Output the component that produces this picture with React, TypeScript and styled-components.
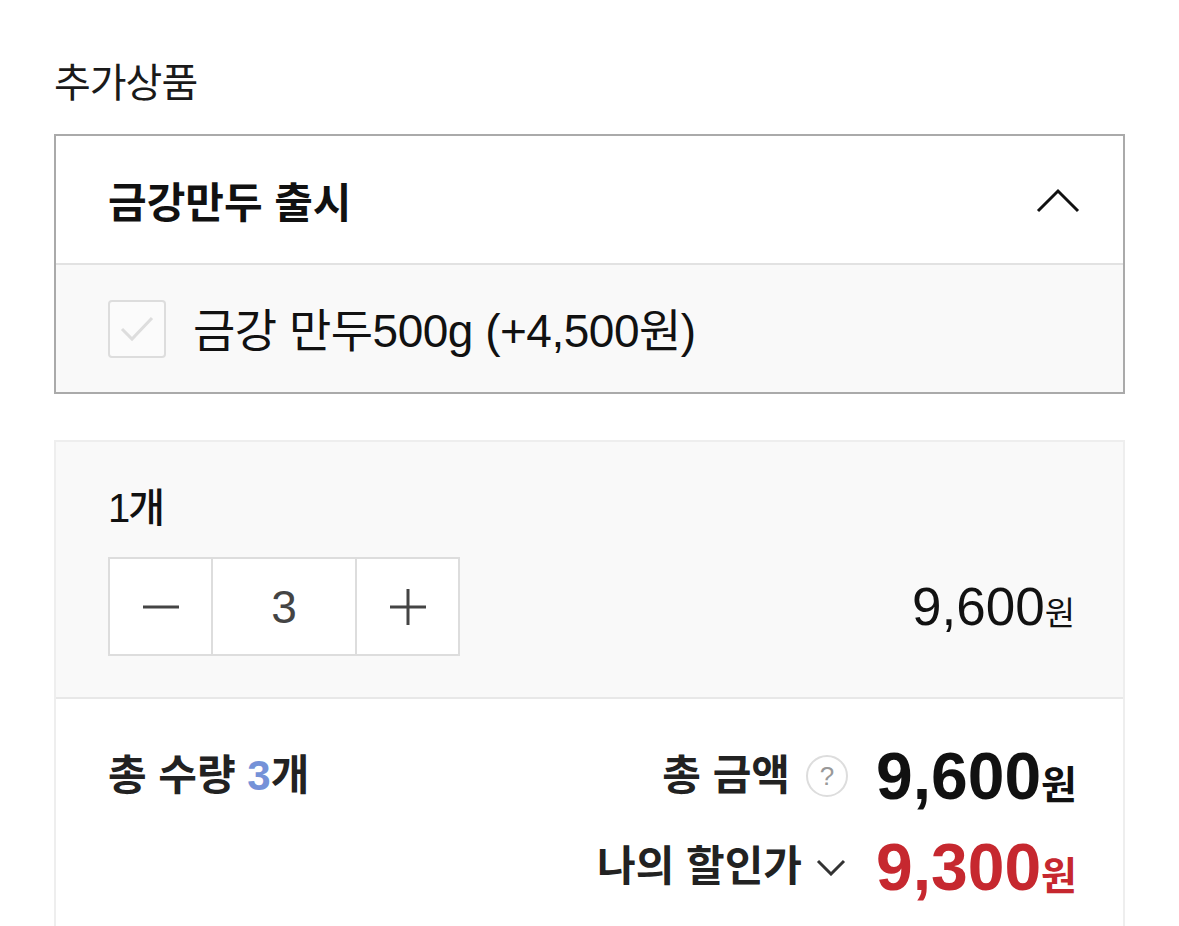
import styled, { createGlobalStyle } from 'styled-components';

const GlobalStyle = createGlobalStyle`
  body {
    margin: 0;
    background: #fff;
    color: #111;
    font-family: "Liberation Sans", "Noto Sans CJK KR", sans-serif;
  }
`;

const Page = styled.div`
  padding: 61px 54px 0;
`;

const Title = styled.h2`
  margin: 0 0 29px;
  font-size: 40px;
  font-weight: 400;
  line-height: 44px;
  letter-spacing: -1px;
  color: #1a1a1a;
`;

const OptionBox = styled.div`
  border: 2px solid #aaa;
`;

const OptionHeader = styled.div`
  align-items: center;
  border-bottom: 2px solid #e2e2e2;
  display: flex;
  height: 127px;
  justify-content: space-between;
  padding: 0 43px 0 52px;
`;

const HeaderTitle = styled.span`
  font-size: 42px;
  font-weight: 700;
`;

const OptionRow = styled.label`
  align-items: center;
  background: #f9f9f9;
  display: flex;
  gap: 27px;
  height: 127px;
  padding-left: 52px;
`;

const Checkbox = styled.span`
  align-items: center;
  background: #fbfbfb;
  border: 2px solid #ddd;
  border-radius: 4px;
  box-sizing: border-box;
  display: flex;
  height: 58px;
  justify-content: center;
  width: 58px;
`;

const OptionText = styled.span`
  font-size: 46px;
  letter-spacing: -0.5px;
  margin-top: -4px;
`;

const CartBox = styled.div`
  border: 2px solid #eee;
  border-bottom: none;
  margin-top: 46px;
`;

const ItemSection = styled.div`
  background: #f9f9f9;
  border-bottom: 2px solid #e8e8e8;
  padding: 44px 48px 41px 52px;
`;

const ItemName = styled.div`
  font-size: 40px;
  font-weight: 500;
  line-height: 44px;
  letter-spacing: -2px;
  margin-bottom: 27px;
`;

const ItemRow = styled.div`
  align-items: center;
  display: flex;
  justify-content: space-between;
`;

const Stepper = styled.div`
  background: #fff;
  border: 2px solid #ddd;
  display: flex;
  height: 95px;
`;

const StepCell = styled.div<{ $wide?: boolean; $divided?: boolean }>`
  align-items: center;
  border-left: ${({ $divided }) => ($divided ? '2px solid #ddd' : 'none')};
  color: #444;
  display: flex;
  font-size: 46px;
  justify-content: center;
  width: ${({ $wide }) => ($wide ? '142px' : '101px')};
`;

const Price = styled.span<{ $size: number; $unit: number; $bold?: boolean; $color?: string }>`
  color: ${({ $color }) => $color ?? '#111'};
  font-size: ${({ $size }) => $size}px;
  font-weight: ${({ $bold }) => ($bold ? 700 : 400)};
  white-space: nowrap;

  small {
    font-size: ${({ $unit }) => $unit}px;
    font-weight: inherit;
  }
`;

const SummarySection = styled.div`
  display: flex;
  justify-content: space-between;
  padding: 44px 46px 80px 52px;
`;

const Label = styled.span`
  color: #222;
  font-size: 42px;
  font-weight: 700;
  line-height: 66px;
`;

const Highlight = styled.span`
  color: #7592d8;
`;

const Totals = styled.div`
  align-items: flex-end;
  display: flex;
  flex-direction: column;
  gap: 25px;
`;

const TotalRow = styled.div`
  align-items: center;
  display: flex;
  height: 66px;
`;

const HelpIcon = styled.span`
  align-items: center;
  border: 2px solid #ddd;
  border-radius: 50%;
  box-sizing: border-box;
  color: #999;
  display: flex;
  font-size: 26px;
  height: 42px;
  justify-content: center;
  margin: 0 28px 0 16px;
  width: 42px;
`;

const ToggleIcon = styled.svg`
  margin: 0 30px 0 14px;
`;

export default function App() {
  return (
    <Page>
      <GlobalStyle />
      <Title>추가상품</Title>
      <OptionBox>
        <OptionHeader>
          <HeaderTitle>금강만두 출시</HeaderTitle>
          <svg width="44" height="26" viewBox="0 0 44 26" fill="none">
            <path d="M2 24 L22 4 L42 24" stroke="#111" strokeWidth="3" />
          </svg>
        </OptionHeader>
        <OptionRow>
          <Checkbox>
            <svg width="36" height="28" viewBox="0 0 36 28" fill="none">
              <path d="M3 14 L13 24 L33 3" stroke="#ddd" strokeWidth="3" />
            </svg>
          </Checkbox>
          <OptionText>금강 만두500g (+4,500원)</OptionText>
        </OptionRow>
      </OptionBox>

      <CartBox>
        <ItemSection>
          <ItemName>1개</ItemName>
          <ItemRow>
            <Stepper>
              <StepCell>
                <svg width="36" height="4" viewBox="0 0 36 4">
                  <path d="M0 2 H36" stroke="#444" strokeWidth="3" />
                </svg>
              </StepCell>
              <StepCell $wide $divided>3</StepCell>
              <StepCell $divided>
                <svg width="36" height="36" viewBox="0 0 36 36">
                  <path d="M0 18 H36 M18 0 V36" stroke="#444" strokeWidth="3" />
                </svg>
              </StepCell>
            </Stepper>
            <Price $size={53} $unit={33}>
              9,600<small>원</small>
            </Price>
          </ItemRow>
        </ItemSection>

        <SummarySection>
          <Label>
            총 수량 <Highlight>3</Highlight>개
          </Label>
          <Totals>
            <TotalRow>
              <Label>총 금액</Label>
              <HelpIcon>?</HelpIcon>
              <Price $size={66} $unit={39} $bold>
                9,600<small>원</small>
              </Price>
            </TotalRow>
            <TotalRow>
              <Label>나의 할인가</Label>
              <ToggleIcon width="30" height="18" viewBox="0 0 30 18" fill="none">
                <path d="M2 3 L15 16 L28 3" stroke="#333" strokeWidth="3" />
              </ToggleIcon>
              <Price $size={66} $unit={39} $bold $color="#c6282f">
                9,300<small>원</small>
              </Price>
            </TotalRow>
          </Totals>
        </SummarySection>
      </CartBox>
    </Page>
  );
}
